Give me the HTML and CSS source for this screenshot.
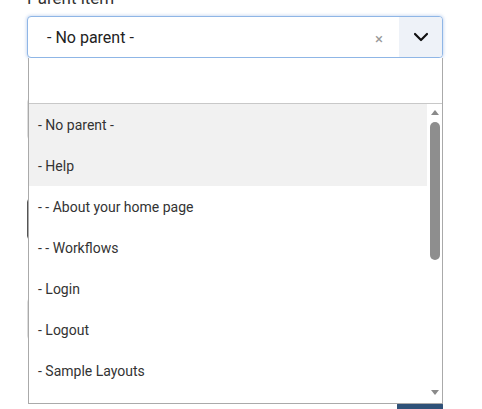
FILE: index.html
```html
<!DOCTYPE html>
<html>

<head>
    <meta charset="utf-8">
    <meta name="viewport" content="width=device-width, initial-scale=1">
    <title>Edit menu item</title>
    <link rel="stylesheet" href="styles.css">
</head>

<body>
    <div class="form">
        <div class="field parent">
            <label class="label">Parent item</label>
            <div class="select">
                <span class="select-value">- No parent -</span>
                <span class="select-clear">&times;</span>
                <span class="select-toggle">
                    <svg width="16" height="10" viewBox="0 0 16 10">
                        <path d="M2 2 L8 8 L14 2" fill="none" stroke="#111" stroke-width="2.2" stroke-linecap="round" stroke-linejoin="round"/>
                    </svg>
                </span>
            </div>

            <div class="dropdown">
                <div class="search"></div>
                <div class="results">
                    <ul class="options">
                        <li class="option selected">- No parent -</li>
                        <li class="option hover">- Help</li>
                        <li class="option">- - About your home page</li>
                        <li class="option">- - Workflows</li>
                        <li class="option">- Login</li>
                        <li class="option">- Logout</li>
                        <li class="option">- Sample Layouts</li>
                    </ul>
                    <div class="scrollbar">
                        <span class="arrow up"></span>
                        <span class="thumb"></span>
                        <span class="arrow down"></span>
                    </div>
                </div>
            </div>
        </div>

        <!-- fields behind the open dropdown -->
        <div class="input light first"></div>
        <div class="input dark"></div>
        <div class="input light third"></div>
        <div class="actions">
            <span class="btn"></span>
        </div>
    </div>
</body>

</html>
```

FILE: styles.css
```css
body {
    margin: 0;
    background: #fff;
    font-family: Roboto, "Noto Sans", sans-serif;
    color: #222;
}

.form {
    margin-top: -14px;
    padding: 0 39px 0 27px;
}

.label {
    display: block;
    font-size: 17px;
    line-height: 24px;
    color: #333;
    margin-bottom: 6px;
}

.parent {
    position: relative;
}

.select {
    display: flex;
    align-items: center;
    height: 40px;
    border: 1px solid #8fb6e6;
    border-radius: 4px;
    box-shadow: 0 0 3px 1px rgba(120, 160, 220, 0.35);
    background: #fff;
    overflow: hidden;
}

.select-value {
    flex: 1;
    padding-left: 19px;
    padding-top: 1px;
    font-size: 16px;
    color: #222;
}

.select-clear {
    width: 22px;
    margin-right: 9px;
    text-align: center;
    font-size: 15px;
    color: #999;
    padding-top: 3px;
}

.select-toggle {
    display: flex;
    align-items: center;
    justify-content: center;
    width: 43px;
    height: 100%;
    background: #eef2f8;
}

.dropdown {
    position: absolute;
    left: 1px;
    right: 0;
    top: 72px;
    height: 345px;
    background: #fff;
    border: 1px solid #aaa;
    border-top: none;
    z-index: 5;
}

.search {
    height: 45px;
    border-bottom: 1px solid #c8c8c8;
}

.results {
    display: flex;
    height: 299px;
    overflow: hidden;
}

.options {
    flex: 1;
    list-style: none;
    margin: 0;
    padding: 0;
}

.option {
    height: 41px;
    line-height: 42px;
    padding-left: 9px;
    font-size: 14px;
    color: #333;
}

.option.selected,
.option.hover {
    background: #f1f1f1;
}

.scrollbar {
    display: flex;
    flex-direction: column;
    align-items: center;
    width: 15px;
    padding-top: 6px;
}

.arrow {
    width: 0;
    height: 0;
    border-left: 4px solid transparent;
    border-right: 4px solid transparent;
}

.arrow.up {
    border-bottom: 5px solid #8a8a8a;
}

.arrow.down {
    margin-top: auto;
    margin-bottom: 8px;
    border-top: 5px solid #8a8a8a;
}

.thumb {
    width: 10px;
    height: 138px;
    margin-top: 7px;
    border-radius: 5px;
    background: #8e8e8e;
}

.input {
    height: 40px;
    border-radius: 4px;
}

.input.light {
    border: 1px solid #ddd;
}

.input.first {
    margin-top: 40px;
}

.input.dark {
    margin-top: 58px;
    border: 1px solid #555;
}

.input.third {
    margin-top: 58px;
}

.actions {
    display: flex;
    justify-content: flex-end;
    margin-top: 62px;
}

.btn {
    width: 46px;
    height: 36px;
    background: #2f5178;
    border-radius: 3px;
}
```
